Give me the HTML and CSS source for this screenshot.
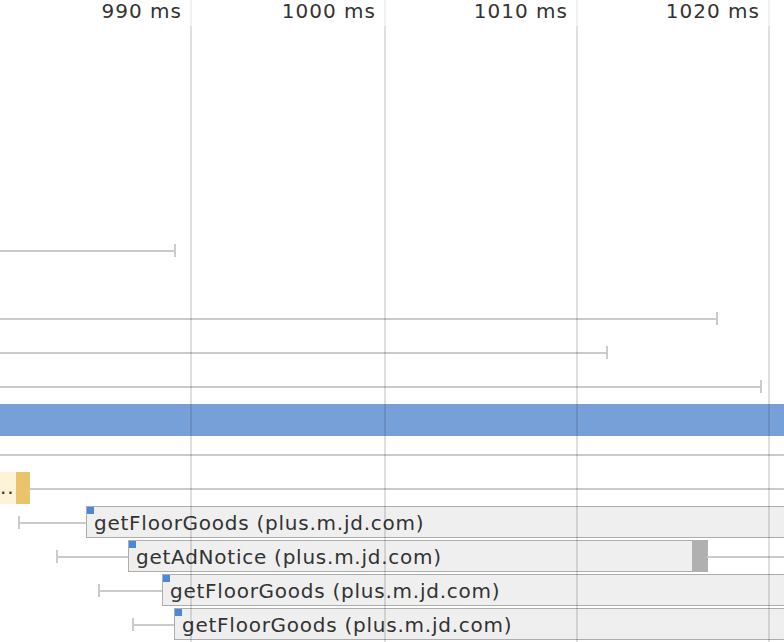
FILE: index.html
```html
<!DOCTYPE html>
<html>
<head>
<meta charset="utf-8">
<link rel="stylesheet" href="styles.css">
</head>
<body>
<div class="chart">
  <div class="rows">
    <div class="row"></div>
    <div class="row"></div>
    <div class="row"></div>
    <div class="row"></div>
    <div class="row"></div>
    <div class="row"></div>
    <div class="row"><div class="whisker end" style="left:0;width:176px"></div></div>
    <div class="row"></div>
    <div class="row"><div class="whisker end" style="left:0;width:718px"></div></div>
    <div class="row"><div class="whisker end" style="left:0;width:608px"></div></div>
    <div class="row"><div class="whisker end" style="left:0;width:762px"></div></div>
    <div class="row"><div class="bar-blue" style="left:0;width:784px"></div></div>
    <div class="row"><div class="whisker" style="left:0;width:784px"></div></div>
    <div class="row">
      <div class="bar-yellow" style="left:0;width:30px"><span class="yellow-label">..</span><span class="yellow-wait"></span></div>
      <div class="whisker" style="left:29px;width:760px"></div>
    </div>
    <div class="row">
      <div class="whisker start" style="left:18px;width:69px"></div>
      <div class="req" style="left:86px;width:720px"><span class="req-label">getFloorGoods (plus.m.jd.com)</span></div>
    </div>
    <div class="row">
      <div class="whisker start" style="left:56px;width:73px"></div>
      <div class="req" style="left:128px;width:565px"><span class="req-label">getAdNotice (plus.m.jd.com)</span></div>
      <div class="req-wait" style="left:692px;width:16px"></div>
      <div class="whisker" style="left:707px;width:80px"></div>
    </div>
    <div class="row">
      <div class="whisker start" style="left:98px;width:65px"></div>
      <div class="req" style="left:162px;width:700px"><span class="req-label">getFloorGoods (plus.m.jd.com)</span></div>
    </div>
    <div class="row">
      <div class="whisker start" style="left:132px;width:43px"></div>
      <div class="req" style="left:174px;width:700px"><span class="req-label">getFloorGoods (plus.m.jd.com)</span></div>
    </div>
  </div>
  <div class="grid">
    <div class="gridline" style="left:190px"><span class="gridlabel">990 ms</span></div>
    <div class="gridline" style="left:384px"><span class="gridlabel">1000 ms</span></div>
    <div class="gridline" style="left:576px"><span class="gridlabel">1010 ms</span></div>
    <div class="gridline" style="left:768px"><span class="gridlabel">1020 ms</span></div>
  </div>
</div>
</body>
</html>
```

FILE: styles.css
```css
html, body {
  margin: 0;
  padding: 0;
  background: #ffffff;
}

body {
  font-family: "DejaVu Sans", "Liberation Sans", sans-serif;
  color: #333333;
}

.chart {
  position: relative;
  width: 784px;
  height: 642px;
  overflow: hidden;
  background: #ffffff;
}

.rows {
  display: flex;
  flex-direction: column;
  padding-top: 29px;
}

.row {
  position: relative;
  height: 34px;
  flex: none;
}

.whisker {
  position: absolute;
  top: 17px;
  height: 2px;
  background: #cbcbcb;
}

.whisker.end::after,
.whisker.start::before {
  content: "";
  position: absolute;
  top: -6px;
  width: 2px;
  height: 13px;
  background: #cbcbcb;
}

.whisker.end::after {
  right: 0;
}

.whisker.start::before {
  left: 0;
}

.bar-blue {
  position: absolute;
  top: 1px;
  height: 32px;
  background: #77a0d9;
}

.bar-yellow {
  position: absolute;
  top: 1px;
  height: 32px;
  display: flex;
  box-sizing: border-box;
}

.yellow-label {
  width: 16px;
  background: #fdf3d6;
  font-size: 20px;
  line-height: 30px;
  overflow: hidden;
  white-space: nowrap;
  color: #333333;
  letter-spacing: 1px;
}

.yellow-wait {
  flex: 1;
  background: #e9c46b;
}

.req {
  position: absolute;
  top: 1px;
  height: 32px;
  box-sizing: border-box;
  background: #efefef;
  border: 1px solid #adadad;
  display: flex;
  align-items: center;
  padding-left: 7px;
}

.req::before {
  content: "";
  position: absolute;
  left: 0;
  top: 0;
  width: 7px;
  height: 7px;
  background: #4a88dc;
}

.req-label {
  font-size: 20px;
  letter-spacing: 0.75px;
  white-space: nowrap;
  color: #333333;
  line-height: 30px;
  margin-top: 1px;
}

.req-wait {
  position: absolute;
  top: 1px;
  height: 32px;
  background: #b0b0b0;
}

.grid {
  position: absolute;
  inset: 0;
  pointer-events: none;
}

.gridline {
  position: absolute;
  top: 0;
  bottom: 0;
  width: 2px;
  background: linear-gradient(to bottom, rgba(0, 0, 0, 0.05) 0, rgba(0, 0, 0, 0.05) 26px, rgba(0, 0, 0, 0.12) 26px);
}

.gridlabel {
  position: absolute;
  right: 10px;
  top: 0;
  font-size: 20px;
  letter-spacing: 1px;
  line-height: 23px;
  white-space: nowrap;
  color: #333333;
}
```
